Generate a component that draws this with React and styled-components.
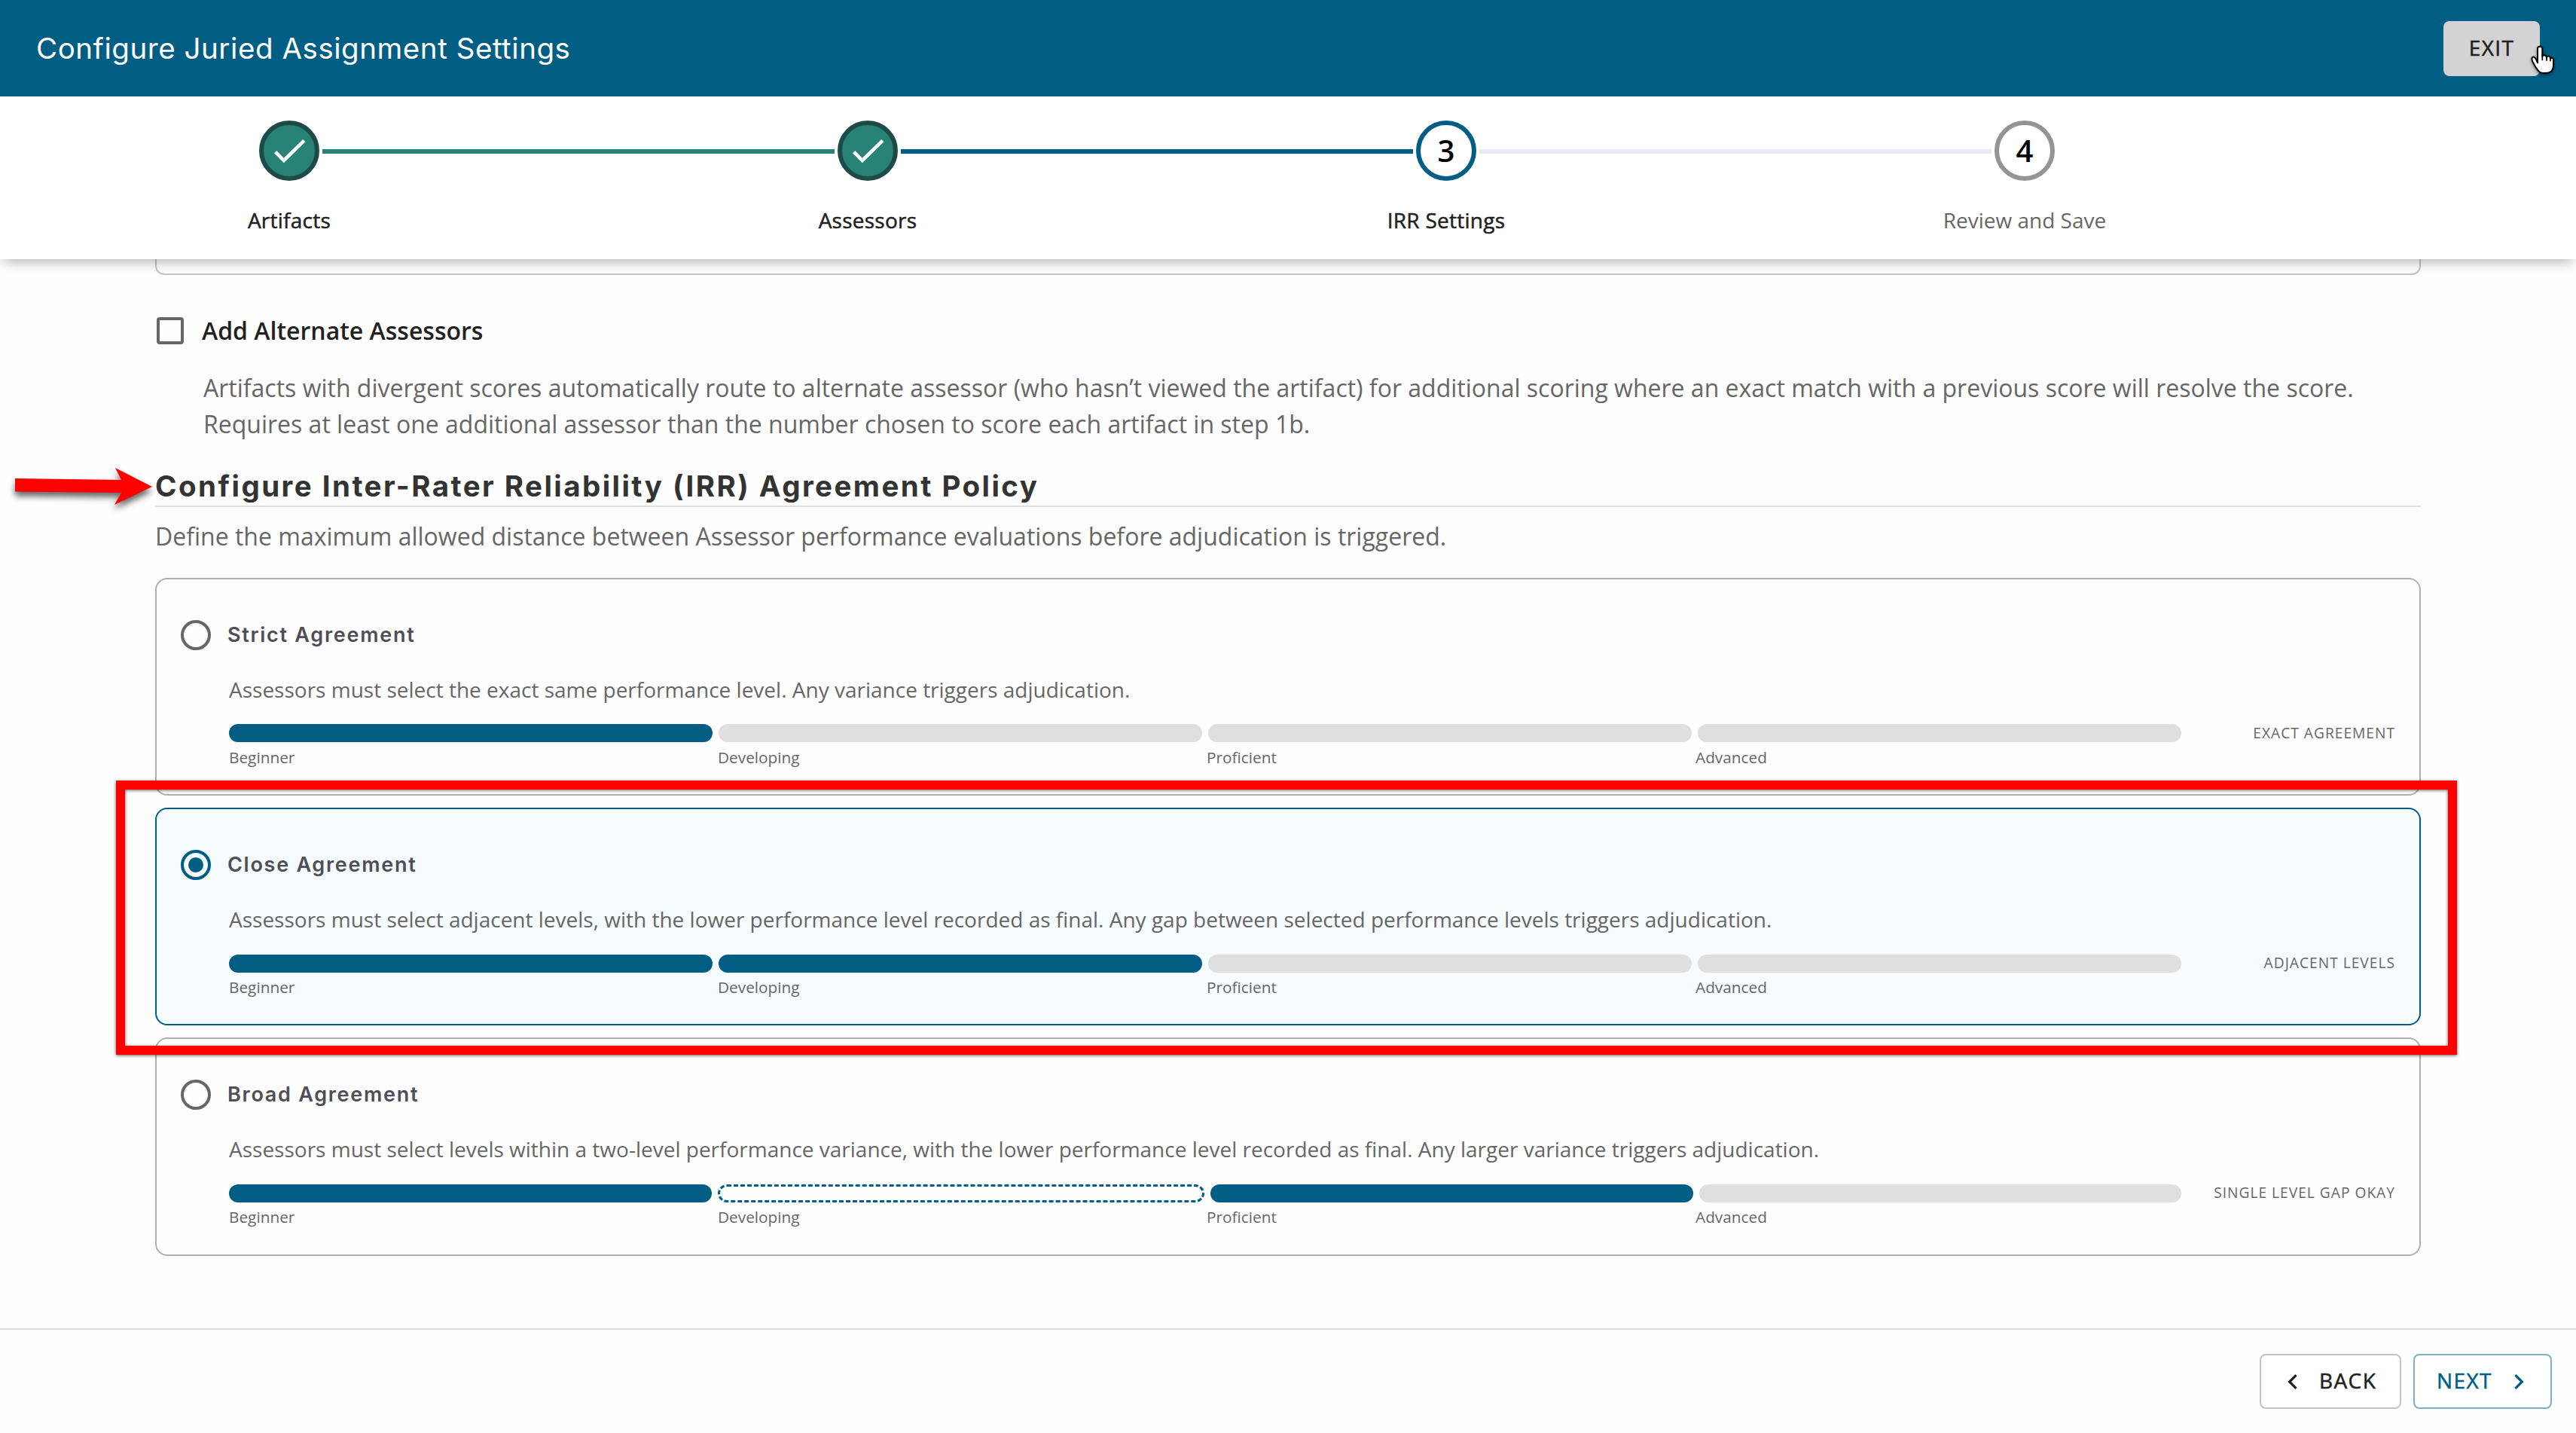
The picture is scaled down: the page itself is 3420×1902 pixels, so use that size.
import React from "react";
import styled, { createGlobalStyle, css } from "styled-components";

const BLUE = "#005e85";
const GREY_TEXT = "#666666";
const BODY = '"Open Sans", "Noto Sans", sans-serif';
const HEADING = 'Inter, "Open Sans", sans-serif';

const GlobalStyle = createGlobalStyle`
  *, *::before, *::after { box-sizing: border-box; }
  body { margin: 0; background: #fefefe; overflow: hidden; }
  h1, h2, h3, p { margin: 0; }
  button { font: inherit; }
`;

const medium = css`
  -webkit-text-stroke: 0.5px currentColor;
`;

const Page = styled.div`
  position: relative;
  display: flex;
  flex-direction: column;
  width: 3420px;
  height: 1902px;
  background: #fefefe;
  font-family: ${BODY};
  color: #212121;
  overflow: hidden;
`;

/* ---------- header ---------- */

const Header = styled.header`
  flex: none;
  display: flex;
  align-items: center;
  justify-content: space-between;
  height: 128px;
  padding: 0 48px;
  background: ${BLUE};
`;

const PageTitle = styled.h1`
  font: 400 38.5px/50px ${HEADING};
  letter-spacing: 0.55px;
  color: #fff;
`;

const Button = styled.button`
  display: flex;
  align-items: center;
  justify-content: ${(p) => (p.$center ? "center" : "flex-start")};
  gap: 15px;
  flex: none;
  width: ${(p) => p.$width}px;
  height: 73px;
  margin: 0;
  padding: ${(p) => p.$padding || "0"};
  border: ${(p) => (p.$border ? `2px solid ${p.$border}` : "0")};
  border-radius: 8px;
  background: ${(p) => p.$background || "#fff"};
  color: ${(p) => p.$color || "#212121"};
  font: 400 28px/40px ${BODY};
  letter-spacing: 1.4px;

  svg {
    flex: none;
    width: 40px;
    height: 40px;
    fill: currentColor;
  }
`;

const ButtonLabel = styled.span`
  padding-bottom: 3px;
  ${medium}
`;

/* ---------- stepper ---------- */

const StepperBar = styled.nav`
  position: relative;
  z-index: 1;
  flex: none;
  display: flex;
  height: 216px;
  padding-top: 32px;
  background: #fff;
  box-shadow: 0 8px 16px -5px rgba(0, 0, 0, 0.32);
`;

const Step = styled.div`
  display: flex;
  flex-direction: column;
  gap: 32px;
  width: 768px;
`;

const StepTrack = styled.div`
  display: grid;
  grid-template-columns: 1fr 80px 1fr;
  column-gap: 4px;
  align-items: center;
`;

const StepLine = styled.span`
  height: 6px;
  margin-top: 2px;
  background: ${(p) => p.$color || "transparent"};
`;

const circleKinds = {
  done: css`
    border-color: #1d4b46;
    background: #298276;
  `,
  active: css`
    border-color: ${BLUE};
  `,
  todo: css`
    border-color: #949494;
  `,
};

const StepCircle = styled.span`
  display: flex;
  align-items: center;
  justify-content: center;
  width: 80px;
  height: 80px;
  border: 6px solid;
  border-radius: 50%;
  font: 600 40px/60px ${BODY};
  ${(p) => circleKinds[p.$kind]}

  & > * {
    color: #000;
  }

  svg {
    width: 68px;
    height: 68px;
    fill: none;
    stroke: #fff;
    stroke-width: 4.6;
  }
`;

const StepLabel = styled.span`
  text-align: center;
  font-size: 28px;
  line-height: 40px;
  ${(p) =>
    p.$muted
      ? css`
          color: ${GREY_TEXT};
        `
      : css`
          letter-spacing: 0.25px;
          color: #212121;
          ${medium}
        `}
`;

/* ---------- content ---------- */

const Content = styled.main`
  flex: none;
  height: 1419px;
  padding: 0 206px;
  overflow: hidden;
`;

const ScrolledCard = styled.div`
  height: 21px;
  border: 2px solid #c4c4c4;
  border-top: 0;
  border-radius: 0 0 12px 12px;
`;

const CheckRow = styled.label`
  display: flex;
  align-items: center;
  gap: 24px;
  height: 36px;
  margin-top: 56px;
  padding-left: 2px;
  font-size: 32px;
  font-weight: 600;
  line-height: 48px;
`;

const CheckBox = styled.span`
  width: 36px;
  height: 36px;
  border: 4px solid #666;
  border-radius: 4px;
`;

const Paragraph = styled.p`
  margin: ${(p) => p.$margin};
  font-size: 32px;
  line-height: 48px;
  color: ${GREY_TEXT};
  white-space: pre-line;
`;

const SectionTitle = styled.h2`
  margin-top: 33px;
  padding-bottom: 1px;
  border-bottom: 2px solid #e0e0e0;
  font: 700 38.5px/50px ${HEADING};
  letter-spacing: 2.45px;
  color: #333;
`;

const CardList = styled.div`
  display: flex;
  flex-direction: column;
  gap: 16px;
  margin-top: 31px;
`;

const Card = styled.section`
  height: 289px;
  padding: 54px 32px 0;
  border: 2px solid ${(p) => (p.$selected ? BLUE : "#b0b0b0")};
  border-radius: 16px;
  background: ${(p) => (p.$selected ? "#f5fbff" : "transparent")};

  &:last-child {
    height: 290px;
  }
`;

const CardHead = styled.label`
  display: flex;
  align-items: center;
  gap: 22px;
  height: 40px;
`;

const Radio = styled.span`
  display: flex;
  align-items: center;
  justify-content: center;
  width: 40px;
  height: 40px;
  border: 4px solid ${(p) => (p.$selected ? BLUE : "#666")};
  border-radius: 50%;

  &::after {
    content: "";
    width: 20px;
    height: 20px;
    border-radius: 50%;
    background: ${(p) => (p.$selected ? BLUE : "transparent")};
  }
`;

const CardTitle = styled.h3`
  padding-bottom: 1px;
  font: 600 27px/38px ${HEADING};
  letter-spacing: 1.73px;
  color: #4e4e58;
`;

const CardBody = styled.div`
  padding: 32px 0 0 64px;
`;

const CardText = styled.p`
  font-size: 28px;
  line-height: 40px;
  color: ${GREY_TEXT};
`;

const ScaleRow = styled.div`
  display: grid;
  grid-template-columns: 2592px 1fr;
  align-items: center;
  height: 24px;
  margin: ${(p) => (p.$lowered ? "27px 0 5px" : "26px 0 6px")};
`;

const Scale = styled.div`
  display: flex;
  gap: 8px;
`;

const segmentKinds = {
  on: css`
    background: ${BLUE};
  `,
  off: css`
    background: #dfdfdf;
  `,
  gap: css`
    height: 18px;
    border: 3px dashed ${BLUE};
  `,
};

const Segment = styled.span`
  box-sizing: content-box;
  flex: 1;
  height: 24px;
  border-radius: 12px;
  ${(p) => segmentKinds[p.$kind]}
`;

const ScaleTag = styled.span`
  padding-bottom: ${(p) => (p.$lowered ? 2 : 0)}px;
  text-align: right;
  text-transform: uppercase;
  font-size: 19.2px;
  line-height: ${(p) => (p.$lowered ? 22 : 24)}px;
  letter-spacing: 1px;
  color: ${GREY_TEXT};
`;

const ScaleLabels = styled.div`
  display: grid;
  grid-template-columns: repeat(4, 1fr);
  column-gap: 4px;
  width: 2592px;
  font-size: 20.8px;
  line-height: 28px;
  color: ${GREY_TEXT};
`;

/* ---------- footer ---------- */

const Footer = styled.footer`
  flex: 1;
  display: flex;
  justify-content: flex-end;
  align-items: flex-start;
  gap: 16px;
  padding: 32px 32px 0;
  border-top: 2px solid #dcdcdc;
`;

/* ---------- annotations over the page ---------- */

const Highlight = styled.div`
  position: absolute;
  z-index: 2;
  left: 154px;
  top: 1036px;
  width: 3108px;
  height: 364px;
  border: 12px solid #ff0000;
  filter: drop-shadow(0 1px 2px rgba(0, 0, 0, 0.6));
  pointer-events: none;
`;

const Arrow = styled.svg`
  position: absolute;
  z-index: 2;
  left: 0;
  top: 600px;
  width: 220px;
  height: 100px;
  overflow: visible;
  filter: drop-shadow(0 6px 4px rgba(0, 0, 0, 0.6));
`;

const Pointer = styled.svg`
  position: absolute;
  z-index: 2;
  left: 3359px;
  top: 58px;
  width: 34px;
  height: 42px;
  overflow: visible;
  filter: drop-shadow(0 2px 2px rgba(0, 0, 0, 0.45));
`;

const CheckIcon = () => (
  <svg viewBox="0 0 68 68">
    <path d="M15.6 35.6 26.8 47 53.8 20.6" />
  </svg>
);

const steps = [
  { label: "Artifacts", kind: "done", after: "#298276" },
  { label: "Assessors", kind: "done", before: "#298276", after: BLUE },
  { label: "IRR Settings", kind: "active", before: BLUE, after: "#e9e9f3" },
  { label: "Review and Save", kind: "todo", before: "#e9e9f3" },
];

const levels = ["Beginner", "Developing", "Proficient", "Advanced"];

const policies = [
  {
    title: "Strict Agreement",
    text: "Assessors must select the exact same performance level. Any variance triggers adjudication.",
    tag: "Exact agreement",
    scale: ["on", "off", "off", "off"],
  },
  {
    title: "Close Agreement",
    text: "Assessors must select adjacent levels, with the lower performance level recorded as final. Any gap between selected performance levels triggers adjudication.",
    tag: "Adjacent levels",
    scale: ["on", "on", "off", "off"],
    selected: true,
    lowered: true,
  },
  {
    title: "Broad Agreement",
    text: "Assessors must select levels within a two-level performance variance, with the lower performance level recorded as final. Any larger variance triggers adjudication.",
    tag: "Single level gap okay",
    scale: ["on", "gap", "on", "off"],
    lowered: true,
  },
];

function Stepper() {
  return (
    <StepperBar>
      {steps.map((s, i) => (
        <Step key={s.label}>
          <StepTrack>
            <StepLine $color={s.before} />
            <StepCircle $kind={s.kind}>
              {s.kind === "done" ? <CheckIcon /> : <span>{i + 1}</span>}
            </StepCircle>
            <StepLine $color={s.after} />
          </StepTrack>
          <StepLabel $muted={s.kind === "todo"}>{s.label}</StepLabel>
        </Step>
      ))}
    </StepperBar>
  );
}

function PolicyCard({ title, text, tag, scale, selected, lowered }) {
  return (
    <Card $selected={selected}>
      <CardHead>
        <Radio $selected={selected} />
        <CardTitle>{title}</CardTitle>
      </CardHead>
      <CardBody>
        <CardText>{text}</CardText>
        <ScaleRow $lowered={lowered}>
          <Scale>
            {scale.map((kind, i) => (
              <Segment key={i} $kind={kind} />
            ))}
          </Scale>
          <ScaleTag $lowered={lowered}>{tag}</ScaleTag>
        </ScaleRow>
        <ScaleLabels>
          {levels.map((l) => (
            <span key={l}>{l}</span>
          ))}
        </ScaleLabels>
      </CardBody>
    </Card>
  );
}

export default function App() {
  return (
    <Page>
      <GlobalStyle />
      <Header>
        <PageTitle>Configure Juried Assignment Settings</PageTitle>
        <Button $center $width={128} $background="#d3d3d3">
          <ButtonLabel>EXIT</ButtonLabel>
        </Button>
      </Header>
      <Stepper />
      <Content>
        <ScrolledCard />
        <CheckRow>
          <CheckBox />
          Add Alternate Assessors
        </CheckRow>
        <Paragraph $margin="34px 0 0 64px">
          {
            "Artifacts with divergent scores automatically route to alternate assessor (who hasn’t viewed the artifact) for additional scoring where an exact match with a previous score will resolve the score.\nRequires at least one additional assessor than the number chosen to score each artifact in step 1b."
          }
        </Paragraph>
        <SectionTitle>Configure Inter-Rater Reliability (IRR) Agreement Policy</SectionTitle>
        <Paragraph $margin="15px 0 0">
          Define the maximum allowed distance between Assessor performance evaluations before adjudication is triggered.
        </Paragraph>
        <CardList>
          {policies.map((p) => (
            <PolicyCard key={p.title} {...p} />
          ))}
        </CardList>
      </Content>
      <Footer>
        <Button $width={188} $padding="0 0 0 22px" $border="#c4c4c4">
          <svg viewBox="0 0 24 24">
            <path d="M15.41 7.41 14 6l-6 6 6 6 1.41-1.41L10.83 12z" />
          </svg>
          <ButtonLabel>BACK</ButtonLabel>
        </Button>
        <Button $width={184} $padding="0 0 0 29px" $border="#80aec3" $color={BLUE}>
          <ButtonLabel>NEXT</ButtonLabel>
          <svg viewBox="0 0 24 24">
            <path d="M10 6 8.59 7.41 13.17 12l-4.58 4.59L10 18l6-6z" />
          </svg>
        </Button>
      </Footer>
      <Highlight />
      <Arrow viewBox="0 0 220 100">
        <path fill="#ff0000" d="M20 35 161 37 153 21 202 46 152 70 161 54 20 52.5z" />
      </Arrow>
      <Pointer viewBox="387 129 102 126">
        <path
          fill="#fff"
          stroke="#000"
          strokeWidth="6"
          strokeLinejoin="round"
          d="M417 205V149Q417 140 426.500 140T436 149V180Q438 174 445 175T453 184Q456 178 462 179T468 188Q471 184 476 186T480 196V212Q480 231 470 240 461 246 446 246 427 246 420 237 407 222 397 200 391 185 398 182 405 180 411 191z"
        />
        <path fill="none" stroke="#000" strokeWidth="5" d="M436 178v18M453 183v14M468 188v11" />
      </Pointer>
    </Page>
  );
}
